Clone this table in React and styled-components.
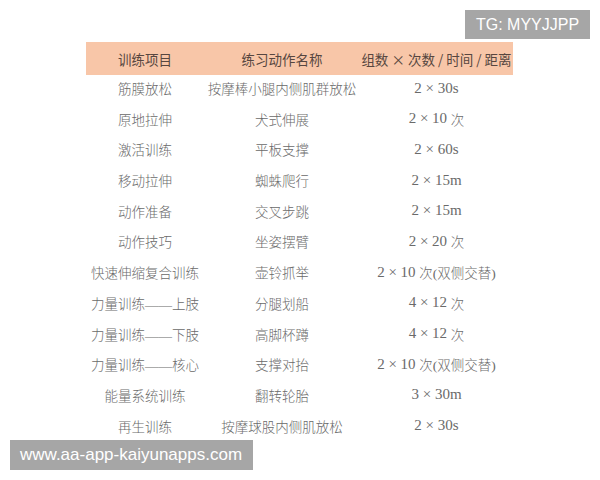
import styled, { createGlobalStyle } from "styled-components";

const rows = [
  ["筋膜放松", "按摩棒小腿内侧肌群放松", "2 × 30s", ""],
  ["原地拉伸", "犬式伸展", "2 × 10 ", "次"],
  ["激活训练", "平板支撑", "2 × 60s", ""],
  ["移动拉伸", "蜘蛛爬行", "2 × 15m", ""],
  ["动作准备", "交叉步跳", "2 × 15m", ""],
  ["动作技巧", "坐姿摆臂", "2 × 20 ", "次"],
  ["快速伸缩复合训练", "壶铃抓举", "2 × 10 ", "次(双侧交替)"],
  ["力量训练——上肢", "分腿划船", "4 × 12 ", "次"],
  ["力量训练——下肢", "高脚杯蹲", "4 × 12 ", "次"],
  ["力量训练——核心", "支撑对抬", "2 × 10 ", "次(双侧交替)"],
  ["能量系统训练", "翻转轮胎", "3 × 30m", ""],
  ["再生训练", "按摩球股内侧肌放松", "2 × 30s", ""],
];

const GlobalStyle = createGlobalStyle`
  html, body {
    margin: 0;
    padding: 0;
    background: #ffffff;
  }
`;

const Page = styled.div`
  position: relative;
  width: 600px;
  height: 480px;
  overflow: hidden;
  background: #ffffff;
  padding: 42px 0 0 86px;
  box-sizing: border-box;
`;

const Table = styled.div`
  display: grid;
  grid-template-columns: 118px 156px 153px;
  grid-auto-rows: 30.7px;
  width: 427px;
`;

const HeaderCell = styled.div`
  height: 33px;
  display: flex;
  align-items: center;
  justify-content: center;
  background: #f8c6a8;
  color: #574640;
  font-family: "Noto Sans CJK SC", "Liberation Sans", sans-serif;
  font-size: 13.5px;
  white-space: nowrap;
`;

const Cell = styled.div`
  display: flex;
  align-items: center;
  justify-content: center;
  color: #6a6a6a;
  font-family: "Liberation Serif", "Noto Sans CJK SC", serif;
  font-size: 13.5px;
  font-weight: 300;
  white-space: nowrap;
`;

const Num = styled.span`
  font-family: "Liberation Serif", serif;
  font-size: 15px;
  white-space: pre;
`;

const Badge = styled.div`
  position: absolute;
  background: #a6a6a6;
  color: #ffffff;
  font-family: "Liberation Sans", Arial, sans-serif;
  font-size: ${(p) => p.$size}px;
  display: flex;
  align-items: center;
  box-sizing: border-box;
  white-space: nowrap;
`;

const TopBadge = styled(Badge)`
  top: 10px;
  left: 465px;
  width: 125px;
  height: 29px;
  padding-left: 11px;
`;

const BottomBadge = styled(Badge)`
  top: 440px;
  left: 10px;
  width: 243px;
  height: 30px;
  padding-left: 10px;
`;

export default function App() {
  return (
    <>
      <GlobalStyle />
      <Page>
        <Table>
          <HeaderCell>训练项目</HeaderCell>
          <HeaderCell>练习动作名称</HeaderCell>
          <HeaderCell>组数 × 次数 / 时间 / 距离</HeaderCell>
          {rows.map(([item, name, num, unit], i) => [
            <Cell key={`${i}-a`}>{item}</Cell>,
            <Cell key={`${i}-b`}>{name}</Cell>,
            <Cell key={`${i}-c`}>
              <Num>{num}</Num>
              {unit}
            </Cell>,
          ])}
        </Table>
        <TopBadge $size={16}>TG: MYYJJPP</TopBadge>
        <BottomBadge $size={17}>www.aa-app-kaiyunapps.com</BottomBadge>
      </Page>
    </>
  );
}
